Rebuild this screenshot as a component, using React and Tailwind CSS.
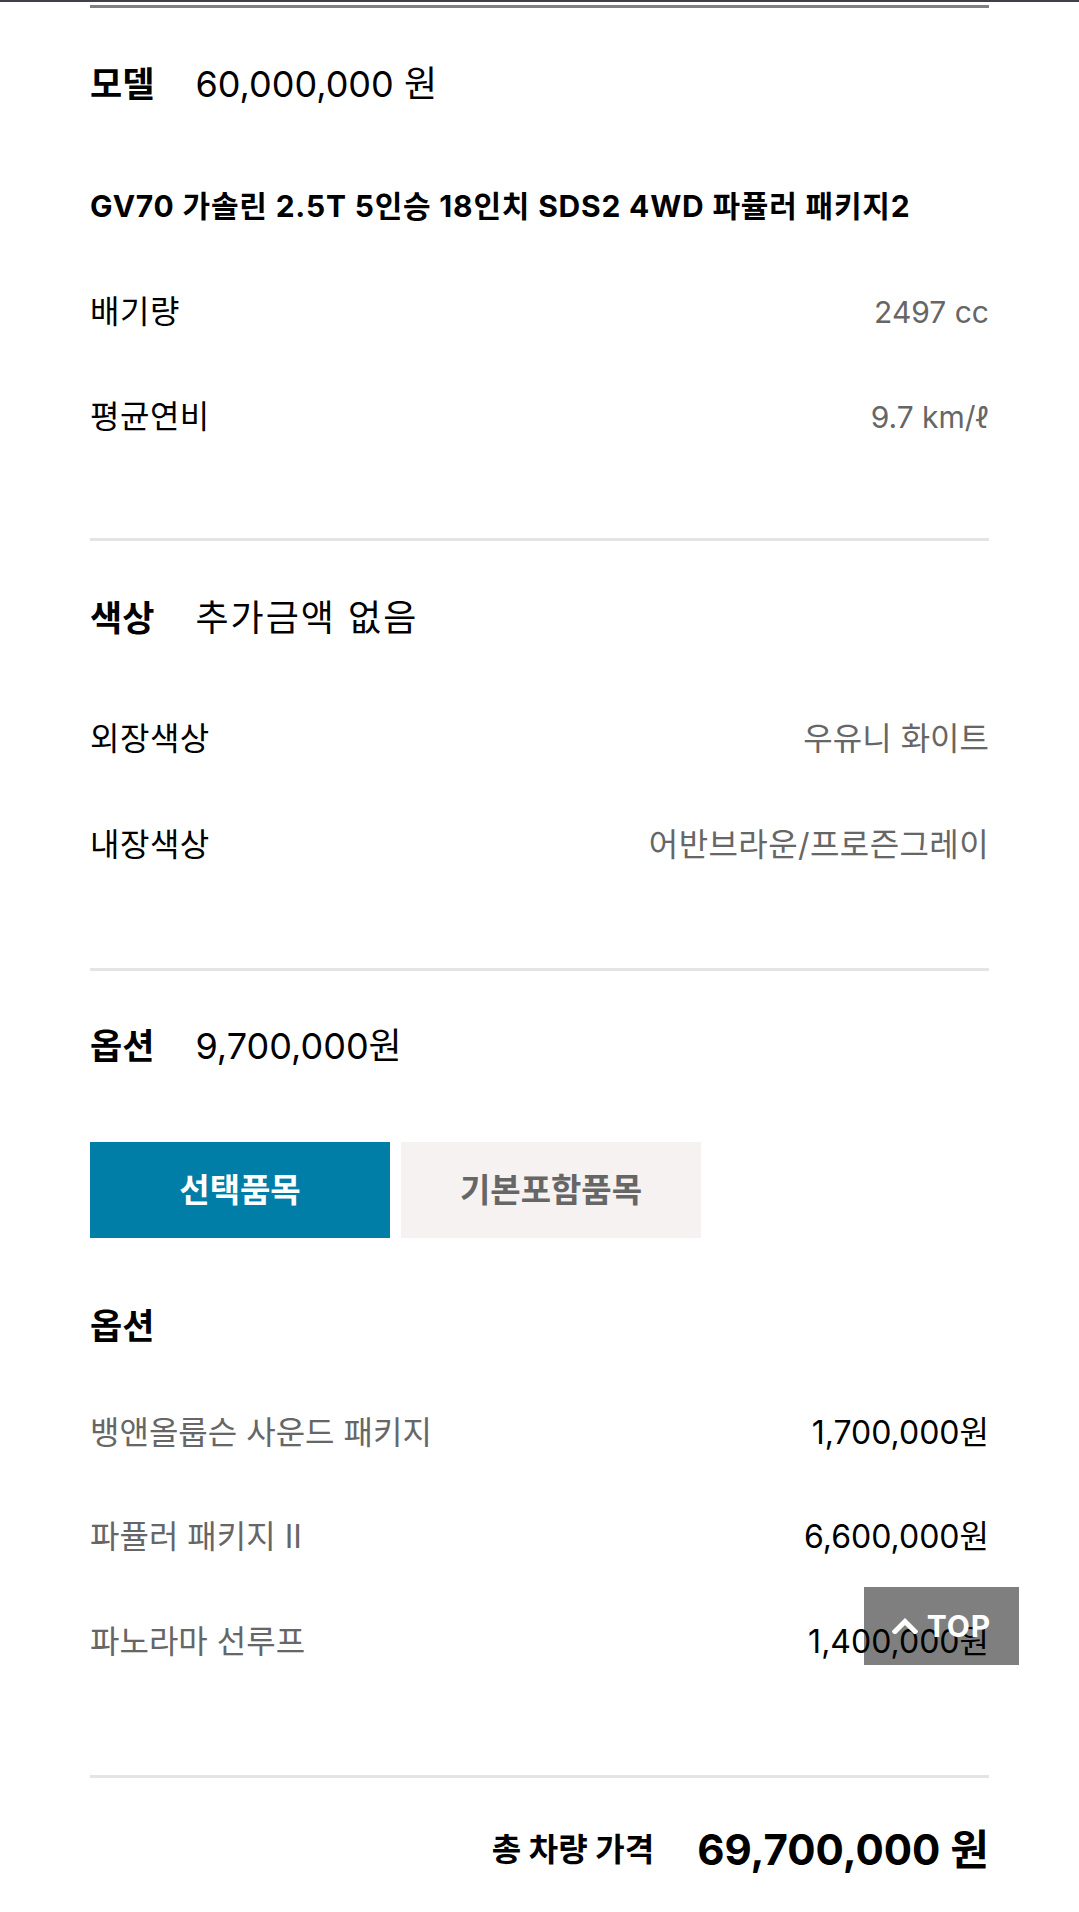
export default function App() {
  const Row = ({ label, value, labelCls, valueCls, mt }) => (
    <div className={`flex h-[40px] items-center justify-between leading-none ${mt}`}>
      <span className={labelCls}>{label}</span>
      <span className={valueCls}>{value}</span>
    </div>
  );
  return (
    <div className="relative min-h-[1912px] w-full bg-white font-[Inter,'Noto_Sans_CJK_KR',sans-serif] text-black">
      <div className="h-[2px] w-full bg-[#404048]" />
      <div className="px-[90px] pb-[34px]">
        <div className="mt-[3px] h-[3px] bg-[#808080]" />

        <div className="mt-[52px] flex h-[48px] items-center gap-[41px] leading-none">
          <span className="text-[35px] font-bold">모델</span>
          <span className="text-[36px]">60,000,000 원</span>
        </div>
        <div className="mt-[78px] flex h-[40px] items-center text-[30px] font-bold leading-none tracking-[0.8px]">
          GV70 가솔린 2.5T 5인승 18인치 SDS2 4WD 파퓰러 패키지2
        </div>
        <Row mt="mt-[66px]" label="배기량" value="2497 cc" labelCls="text-[32px] tracking-[0.5px]" valueCls="text-[30px] text-[#666]" />
        <Row mt="mt-[65px]" label="평균연비" value="9.7 km/ℓ" labelCls="text-[32px] tracking-[0.5px]" valueCls="text-[30px] text-[#666]" />
        <div className="mt-[101px] h-[3px] bg-[#e4e4e4]" />

        <div className="mt-[53px] flex h-[48px] items-center gap-[41px] leading-none">
          <span className="text-[35px] font-bold">색상</span>
          <span className="text-[36px] tracking-[2px]">추가금액 없음</span>
        </div>
        <Row mt="mt-[77px]" label="외장색상" value="우유니 화이트" labelCls="text-[32px] tracking-[0.5px]" valueCls="text-[32px] text-[#666]" />
        <Row mt="mt-[66px]" label="내장색상" value="어반브라운/프로즌그레이" labelCls="text-[32px] tracking-[0.5px]" valueCls="text-[32px] tracking-[0.4px] text-[#666]" />
        <div className="mt-[103px] h-[3px] bg-[#e4e4e4]" />

        <div className="mt-[51px] flex h-[48px] items-center gap-[41px] leading-none">
          <span className="text-[35px] font-bold">옵션</span>
          <span className="text-[36px]">9,700,000원</span>
        </div>
        <div className="mt-[72px] flex gap-[11px]">
          <button className="flex h-[96px] w-[300px] items-center justify-center bg-[#017ea7] text-[33px] font-bold leading-none text-white">
            선택품목
          </button>
          <button className="flex h-[96px] w-[300px] items-center justify-center bg-[#f5f2f1] text-[33px] font-bold leading-none text-[#666]">
            기본포함품목
          </button>
        </div>
        <div className="mt-[68px] flex h-[40px] items-center text-[35px] font-bold leading-none">옵션</div>
        <Row mt="mt-[67px]" label="뱅앤올룹슨 사운드 패키지" value="1,700,000원" labelCls="text-[32px] text-[#666]" valueCls="text-[32px]" />
        <Row mt="mt-[64px]" label="파퓰러 패키지 II" value="6,600,000원" labelCls="text-[32px] text-[#666]" valueCls="text-[32px]" />
        <Row mt="mt-[65px]" label="파노라마 선루프" value="1,400,000원" labelCls="text-[32px] text-[#666]" valueCls="text-[32px]" />
        <div className="mt-[113px] h-[3px] bg-[#e4e4e4]" />

        <div className="mt-[44px] flex h-[56px] items-center justify-end gap-[43px] leading-none">
          <span className="text-[32px] font-bold">총 차량 가격</span>
          <span className="text-[42px] font-bold">69,700,000 원</span>
        </div>
      </div>

      <button className="absolute right-[60px] top-[1587px] flex h-[78px] w-[155px] items-center justify-center gap-[9px] bg-black/50 text-white">
        <svg width="26" height="16" viewBox="0 0 26 16" fill="none">
          <path d="M3 13.5 L13 3.5 L23 13.5" stroke="white" strokeWidth="5" strokeLinecap="square" />
        </svg>
        <span className="text-[30px] font-bold leading-none tracking-[1px]">TOP</span>
      </button>
    </div>
  );
}
